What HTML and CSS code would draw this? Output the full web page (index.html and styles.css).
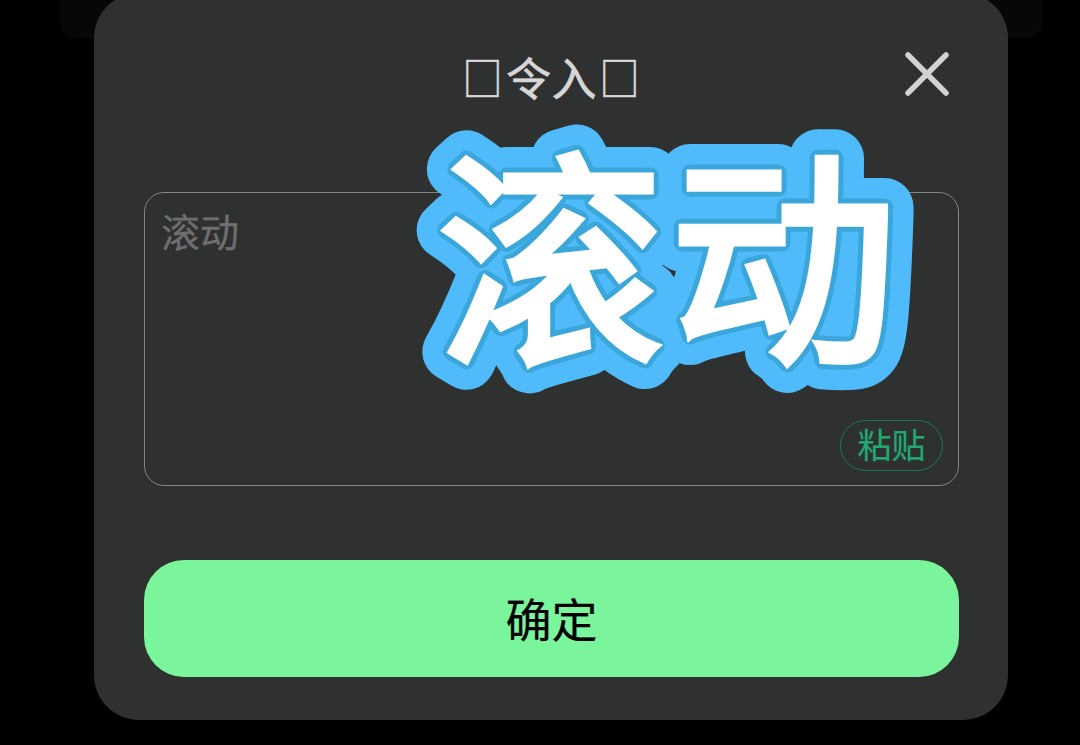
FILE: index.html
```html
<!DOCTYPE html>
<html lang="zh">
<head>
<meta charset="utf-8">
<title>口令入口</title>
<link rel="stylesheet" href="styles.css">
</head>
<body>
<div class="backdrop-panel"></div>
<main class="modal">
  <header class="modal-head">
    <h1 class="modal-title"><span class="tofu">□</span>令入<span class="tofu">□</span></h1>
    <button class="close" aria-label="关闭">
      <svg viewBox="0 0 44 44" width="44" height="44"><path class="close-x" d="M3 3 L41 41 M41 3 L3 41"/></svg>
    </button>
  </header>
  <div class="field">
    <div class="placeholder">滚动</div>
    <div class="paste-row"><span class="paste">粘贴</span></div>
  </div>
  <button class="confirm">确定</button>
</main>
<svg class="sticker" viewBox="0 0 540 300" width="540" height="300" aria-label="滚动">
  <defs>
    <g id="word">
      <text class="glyph" transform="translate(37 238)" x="0" y="0">滚</text>
      <text class="glyph" transform="translate(270 238)" x="0" y="0">动</text>
    </g>
  </defs>
  <use href="#word" class="layer-outer"/>
  <use href="#word" class="layer-mid"/>
  <use href="#word" class="layer-top"/>
</svg>
</body>
</html>
```
FILE: styles.css
```css
* { box-sizing: border-box; }
html, body { margin: 0; padding: 0; }
body {
  position: relative;
  width: 1080px;
  height: 745px;
  overflow: hidden;
  background: #000;
  font-family: "Noto Sans CJK SC", "Noto Sans", sans-serif;
}
.backdrop-panel {
  position: absolute;
  left: 60px;
  top: -40px;
  width: 982px;
  height: 78px;
  border-radius: 16px;
  background: #070707;
}
.modal {
  position: relative;
  margin: -7px 0 0 94px;
  width: 914px;
  height: 727px;
  padding: 0 49px 0 50px;
  border-radius: 45px;
  background: #2f3030;
  display: flex;
  flex-direction: column;
}
.modal-head {
  position: relative;
  height: 168px;
  margin-bottom: 31px;
  display: flex;
  align-items: center;
  justify-content: center;
  flex: none;
}
.modal-title {
  margin: 0;
  font-size: 45px;
  line-height: 60px;
  font-weight: 400;
  letter-spacing: 0.5px;
  color: #d6d6d6;
  -webkit-text-stroke: 0.7px #d6d6d6;
}
.tofu {
  display: inline-block;
  transform: scaleX(0.89);
}
.close {
  position: absolute;
  top: 59px;
  right: 10px;
  width: 44px;
  height: 44px;
  padding: 0;
  border: 0;
  background: none;
  display: flex;
}
.close-x {
  fill: none;
  stroke: #d2d2d2;
  stroke-width: 5.5;
  stroke-linecap: round;
}
.field {
  height: 294px;
  flex: none;
  border: 1px solid #858585;
  border-radius: 20px;
  padding: 9px 15px 14px 16px;
  display: flex;
  flex-direction: column;
  justify-content: space-between;
}
.placeholder {
  font-size: 39px;
  line-height: 56px;
  color: #6e6e6e;
  -webkit-text-stroke: 0.3px #6e6e6e;
}
.paste-row {
  display: flex;
  justify-content: flex-end;
}
.paste {
  width: 103px;
  height: 51px;
  border: 1.5px solid #1a7a58;
  border-radius: 26px;
  color: #21a872;
  font-size: 34px;
  line-height: 45px;
  text-align: center;
  -webkit-text-stroke: 0.2px #21a872;
}
.confirm {
  margin-top: 74px;
  height: 117px;
  flex: none;
  border: 0;
  border-radius: 40px;
  background: #7af59b;
  color: #000;
  font-family: inherit;
  font-size: 46px;
  line-height: 60px;
  padding: 0 0 4px;
  -webkit-text-stroke: 0.2px #000;
}
.sticker {
  position: absolute;
  left: 400px;
  top: 108px;
}
.glyph {
  font-family: "Noto Sans CJK SC", sans-serif;
  font-weight: 400;
  font-size: 227px;
}
.layer-outer {
  fill: #4fbbfa;
  stroke: #4fbbfa;
  stroke-width: 58px;
  stroke-linejoin: round;
}
.layer-mid {
  fill: #3ba6d9;
  stroke: #3ba6d9;
  stroke-width: 17px;
  stroke-linejoin: round;
}
.layer-top {
  fill: #fff;
  stroke: #fff;
  stroke-width: 7px;
  stroke-linejoin: miter;
}
```
